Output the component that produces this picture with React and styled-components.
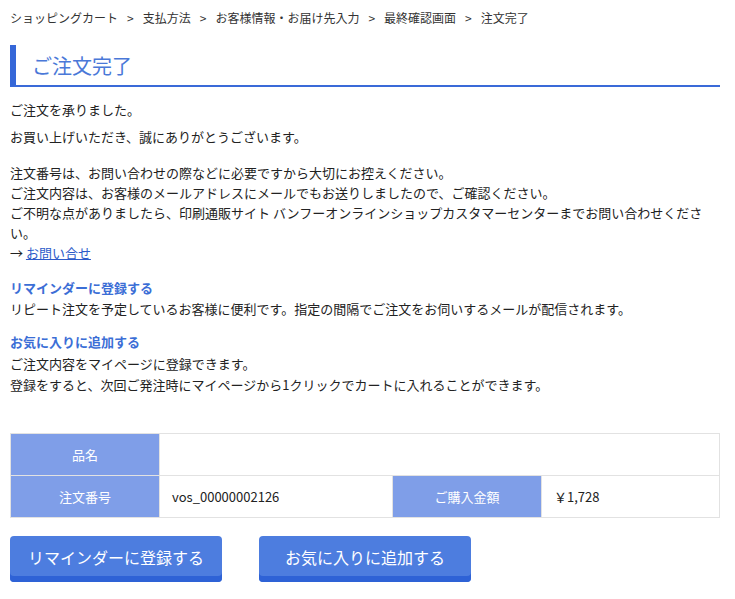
import React from 'react'
import styled, { createGlobalStyle } from 'styled-components'

const Global = createGlobalStyle`
  body {
    margin: 0;
    background: #fff;
    font-family: "Noto Sans CJK JP", "Noto Sans", sans-serif;
    color: #222;
  }
`

const Page = styled.div`
  padding: 8px 15px 20px 10px;
`

const Crumbs = styled.div`
  font-size: 12px;
  color: #333;
  line-height: 20px;
  margin-bottom: 17px;
  span { margin: 0 9px; }
`

const Heading = styled.h1`
  margin: 0 0 12px;
  height: 42px;
  display: flex;
  align-items: center;
  padding-left: 16px;
  font-size: 20px;
  font-weight: normal;
  color: #4a78d8;
  border-left: 6px solid #3567d8;
  border-bottom: 2px solid #3a6ad8;
  box-sizing: border-box;
`

const Para = styled.p`
  margin: 0 0 ${p => p.$gap || 0}px;
  font-size: 13px;
  line-height: ${p => p.$lh || 20}px;
  max-width: 702px;
`

const SubTitle = styled.div`
  font-size: 13px;
  font-weight: bold;
  color: #3b6ed6;
  line-height: 18px;
  margin-top: ${p => p.$top || 0}px;
  margin-bottom: 2px;
`

const Link = styled.a`
  color: #2d5bc9;
  text-decoration: underline;
`

const Table = styled.table`
  margin-top: 38px;
  width: 710px;
  border-collapse: collapse;
  font-size: 13px;
  td, th { border: 1px solid #e2e2e2; height: 41px; padding: 0 12px; }
`

const Th = styled.th`
  background: #7f9ee8;
  color: #fff;
  font-weight: normal;
  width: 124px;
`

const Buttons = styled.div`
  display: flex;
  gap: 37px;
  margin-top: 18px;
`

const Button = styled.button`
  width: 212px;
  height: 46px;
  border: none;
  border-radius: 4px;
  background: #4d7ddf;
  box-shadow: inset 0 -6px 0 #2e62d6;
  color: #fff;
  font-size: 16px;
  font-family: inherit;
  padding-bottom: 6px;
`

export default function App() {
  return (
    <Page>
      <Global />
      <Crumbs>
        ショッピングカート<span>&gt;</span>支払方法<span>&gt;</span>お客様情報・お届け先入力<span>&gt;</span>最終確認画面<span>&gt;</span>注文完了
      </Crumbs>
      <Heading>ご注文完了</Heading>
      <Para $lh={22} $gap={5}>ご注文を承りました。</Para>
      <Para $lh={22} $gap={15}>お買い上げいただき、誠にありがとうございます。</Para>
      <Para>
        注文番号は、お問い合わせの際などに必要ですから大切にお控えください。<br />
        ご注文内容は、お客様のメールアドレスにメールでもお送りしましたので、ご確認ください。<br />
        ご不明な点がありましたら、印刷通販サイト バンフーオンラインショップカスタマーセンターまでお問い合わせください。<br />
        → <Link href="#">お問い合せ</Link>
      </Para>
      <SubTitle $top={16}>リマインダーに登録する</SubTitle>
      <Para>リピート注文を予定しているお客様に便利です。指定の間隔でご注文をお伺いするメールが配信されます。</Para>
      <SubTitle $top={14}>お気に入りに追加する</SubTitle>
      <Para $lh={21}>
        ご注文内容をマイページに登録できます。<br />
        登録をすると、次回ご発注時にマイページから1クリックでカートに入れることができます。
      </Para>
      <Table>
        <tbody>
          <tr>
            <Th>品名</Th>
            <td colSpan={3}></td>
          </tr>
          <tr>
            <Th>注文番号</Th>
            <td style={{ width: 208 }}>vos_00000002126</td>
            <Th>ご購入金額</Th>
            <td>￥1,728</td>
          </tr>
        </tbody>
      </Table>
      <Buttons>
        <Button>リマインダーに登録する</Button>
        <Button>お気に入りに追加する</Button>
      </Buttons>
    </Page>
  )
}
